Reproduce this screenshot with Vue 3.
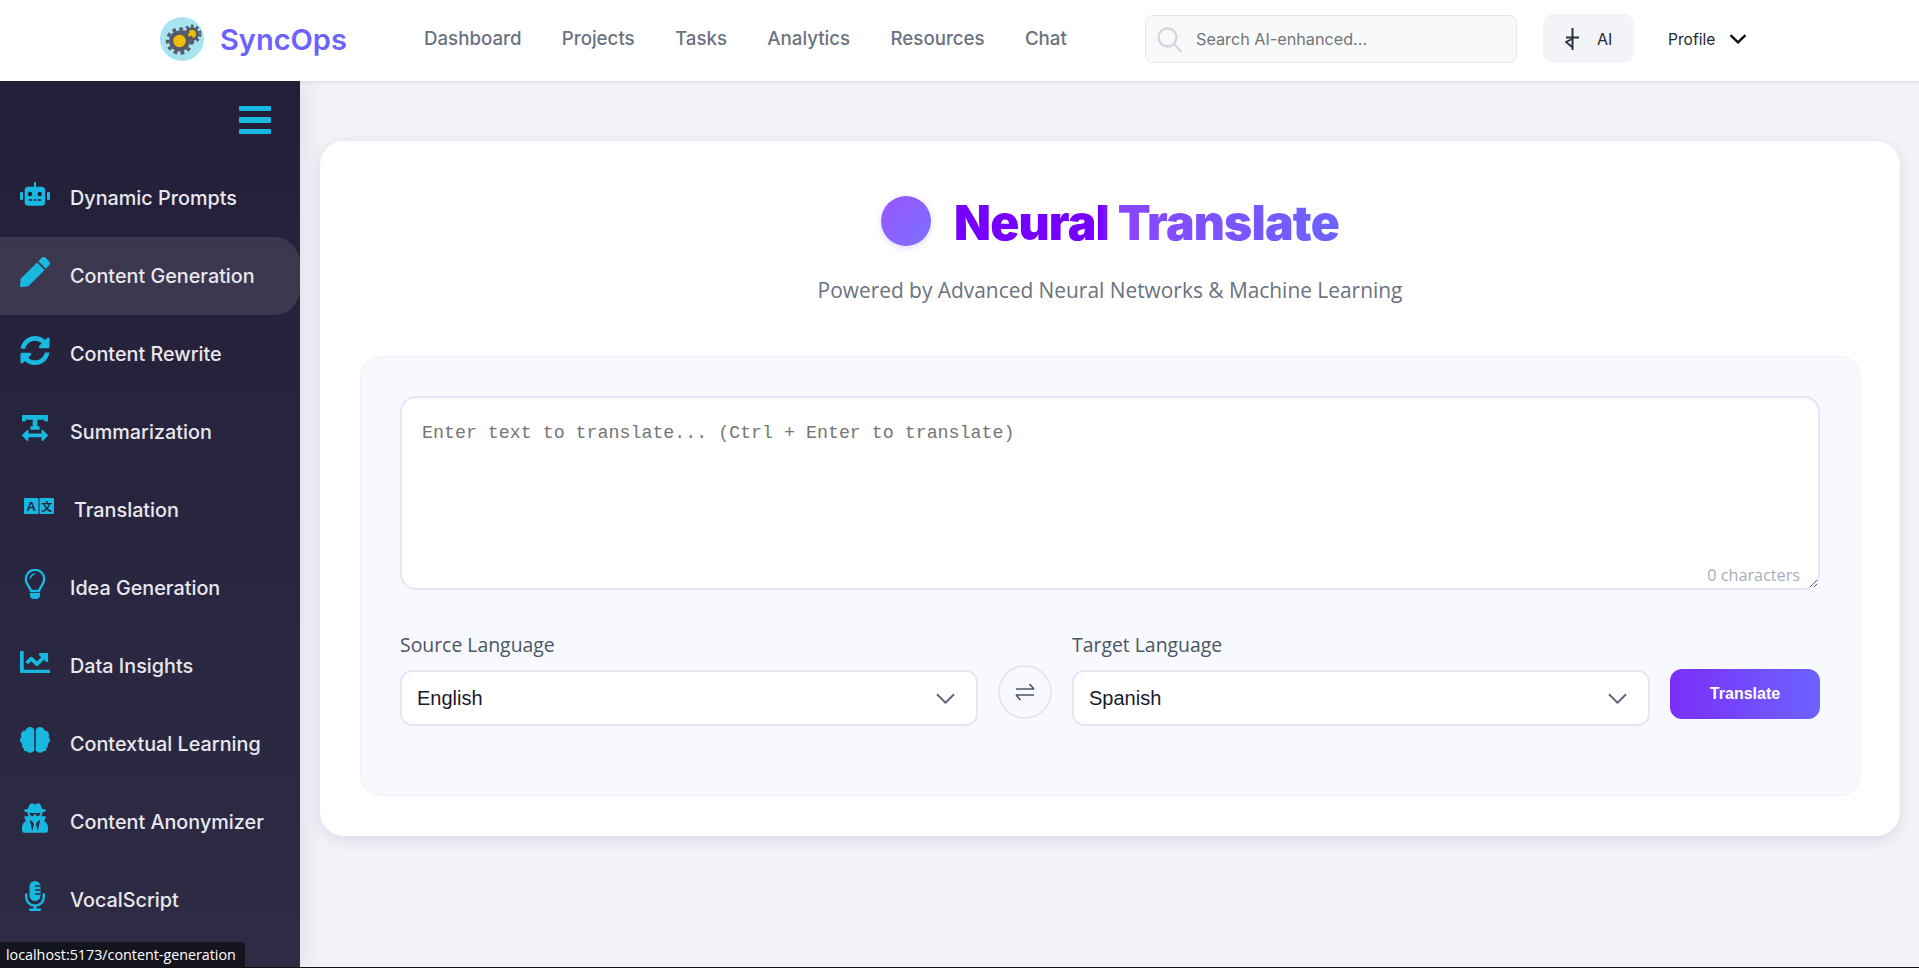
<template>
  <div class="page">
    <header class="topbar">
      <div class="brand">
        <svg class="brand-logo" viewBox="0 0 44 44">
          <circle cx="22" cy="22" r="22" fill="#a6e5f0" />
          <circle cx="32" cy="17" r="5.5" fill="#f0c000" stroke="#565a68" stroke-width="3" />
          <circle cx="32" cy="17" r="8" fill="none" stroke="#565a68" stroke-width="3" stroke-dasharray="2.6 2.6" />
          <circle cx="19.5" cy="24" r="10.5" fill="#565a68" />
          <circle cx="19.5" cy="24" r="12" fill="none" stroke="#565a68" stroke-width="3.4" stroke-dasharray="3.6 3.4" />
          <circle cx="19.5" cy="24" r="6.2" fill="#f0c000" />
        </svg>
        <span class="brand-name">SyncOps</span>
      </div>
      <nav class="nav">
        <span v-for="n in navLinks" :key="n">{{ n }}</span>
      </nav>
      <div class="search">
        <svg class="search-icon" viewBox="0 0 25 25" fill="none" stroke="#d3d6dd" stroke-width="2.4">
          <circle cx="10.5" cy="10.5" r="9" />
          <path d="M17 17l7 7.5" stroke-linecap="round" />
        </svg>
        <input type="text" placeholder="Search AI-enhanced..." />
      </div>
      <button class="ai-btn">
        <svg viewBox="0 0 14 22" width="14" height="22" fill="none" stroke="#2b3040" stroke-width="2">
          <path d="M7.5 0v22M1 9.5h13" />
          <path d="M7 11L1 14l6 5" stroke-width="1.8" />
        </svg>
        <span>AI</span>
      </button>
      <div class="profile">
        <span>Profile</span>
        <svg viewBox="0 0 18 10" width="18" height="10" fill="none" stroke="#111" stroke-width="2.4">
          <path d="M1.5 1.2L9 8.4l7.5-7.2" />
        </svg>
      </div>
    </header>

    <div class="body">
      <aside class="sidebar">
        <div class="side-head">
          <div class="burger"><i></i><i></i><i></i></div>
        </div>
        <a
          v-for="item in menu"
          :key="item.label"
          class="side-item"
          :class="{ active: item.active, shifted: item.shifted }"
        >
          <span class="side-icon">
            <svg :viewBox="item.box" :width="item.w" :height="item.h" fill="#18b8e0" v-html="item.svg"></svg>
          </span>
          <span class="side-label">{{ item.label }}</span>
        </a>
      </aside>

      <main class="main">
        <section class="card">
          <div class="title-row">
            <span class="title-dot"></span>
            <h1>Neural Translate</h1>
          </div>
          <p class="subtitle">Powered by Advanced Neural Networks &amp; Machine Learning</p>

          <div class="panel">
            <div class="input-wrap">
              <textarea placeholder="Enter text to translate... (Ctrl + Enter to translate)"></textarea>
              <span class="count">0 characters</span>
            </div>
            <div class="controls">
              <div class="lang">
                <label>Source Language</label>
                <div class="select">
                  <span>English</span>
                  <svg viewBox="0 0 20 11" width="19" height="11" fill="none" stroke="#62667a" stroke-width="2">
                    <path d="M1 1l9 9 9-9" />
                  </svg>
                </div>
              </div>
              <button class="swap">
                <svg viewBox="0 0 20 18" width="20" height="18" fill="none" stroke="#4d5266" stroke-width="1.6">
                  <path d="M1 6h18M14.5 1l4.5 5M19 12H1M5.5 17L1 12" />
                </svg>
              </button>
              <div class="lang">
                <label>Target Language</label>
                <div class="select">
                  <span>Spanish</span>
                  <svg viewBox="0 0 20 11" width="19" height="11" fill="none" stroke="#62667a" stroke-width="2">
                    <path d="M1 1l9 9 9-9" />
                  </svg>
                </div>
              </div>
              <button class="translate">Translate</button>
            </div>
          </div>
        </section>
      </main>
    </div>

    <div class="status">localhost:5173/content-generation</div>
    <div class="bottom-line"></div>
  </div>
</template>

<script setup>
const navLinks = ['Dashboard', 'Projects', 'Tasks', 'Analytics', 'Resources', 'Chat']

const brainSide = `
  <circle cx="10" cy="6.3" r="4.3"/><circle cx="5.5" cy="10" r="4.5"/><circle cx="4.4" cy="15" r="4.4"/>
  <circle cx="6.5" cy="20" r="4.5"/><circle cx="10" cy="23.5" r="4.3"/><rect x="4" y="6" width="10.2" height="20"/>`

const menu = [
  {
    label: 'Dynamic Prompts', box: '0 0 30 30', w: 30, h: 30,
    svg: `<rect x="14" y="3" width="2" height="6"/><rect x="4.7" y="7.7" width="20.4" height="19" rx="3.5"/>
      <rect x="0" y="13" width="3" height="8" rx="1"/><rect x="27" y="13" width="3" height="8" rx="1"/>
      <circle cx="10" cy="15" r="2.2" fill="#241f38"/><circle cx="19.7" cy="15" r="2.2" fill="#241f38"/>
      <path d="M9 21h12" stroke="#241f38" stroke-width="1.6" stroke-dasharray="3 1.5"/>`
  },
  {
    label: 'Content Generation', active: true, box: '0 0 512 512', w: 30, h: 30,
    svg: `<path d="M290.74 93.24l128.02 128.02-277.99 277.99-114.14 12.6C11.35 513.54-1.56 500.62.14 485.34l12.7-114.22 277.9-277.88zm207.2-19.06l-60.11-60.11c-18.75-18.75-49.16-18.75-67.91 0l-56.55 56.55 128.02 128.02 56.55-56.55c18.75-18.76 18.75-49.16 0-67.91z"/>`
  },
  {
    label: 'Content Rewrite', box: '0 0 512 512', w: 31, h: 31,
    svg: `<path d="M370.72 133.28C339.458 104.008 298.888 87.962 255.848 88c-77.458.068-144.328 53.178-162.791 126.85-1.344 5.363-6.122 9.15-11.651 9.15H24.103c-7.498 0-13.194-6.807-11.807-14.176C33.933 94.924 134.813 8 256 8c66.448 0 126.791 26.136 171.315 68.685L463.03 40.97C478.149 25.851 504 36.559 504 57.941V192c0 13.255-10.745 24-24 24H345.941c-21.382 0-32.09-25.851-16.971-40.971l41.75-41.749zM32 296h134.059c21.382 0 32.09 25.851 16.971 40.971l-41.75 41.75c31.262 29.273 71.835 45.319 114.876 45.28 77.418-.07 144.315-53.144 162.787-126.849 1.344-5.363 6.122-9.15 11.651-9.15h57.304c7.498 0 13.194 6.807 11.807 14.176C478.067 417.076 377.187 504 256 504c-66.448 0-126.791-26.136-171.315-68.685L48.97 471.03C33.851 486.149 8 475.441 8 454.059V320c0-13.255 10.745-24 24-24z"/>`
  },
  {
    label: 'Summarization', box: '0 32 448 448', w: 26, h: 26,
    svg: `<path d="M432 32H16A16 16 0 0 0 0 48v80a16 16 0 0 0 16 16h32a16 16 0 0 0 16-16v-16h120v112h-24a16 16 0 0 0-16 16v32a16 16 0 0 0 16 16h128a16 16 0 0 0 16-16v-32a16 16 0 0 0-16-16h-24V112h120v16a16 16 0 0 0 16 16h32a16 16 0 0 0 16-16V48a16 16 0 0 0-16-16zm-68.69 260.69C354 283.36 336 288.36 336 304v48H112v-48c0-14.31-17.31-21.32-27.31-11.31l-80 80a16 16 0 0 0 0 22.62l80 80C94 484.64 112 479.64 112 464v-48h224v48c0 14.31 17.31 21.32 27.31 11.31l80-80a16 16 0 0 0 0-22.62z"/>`
  },
  {
    label: 'Translation', shifted: true, box: '0 0 30 16', w: 30, h: 16,
    svg: `<rect x="0" y="0" width="14.5" height="16" rx="1"/><rect x="15.5" y="0" width="14.5" height="16" rx="1"/>
      <text x="7.2" y="13" font-size="13" font-weight="700" text-anchor="middle" fill="#2a2640" font-family="'Liberation Sans', sans-serif">A</text>
      <text x="22.7" y="12.8" font-size="11" font-weight="700" text-anchor="middle" fill="#2a2640" font-family="'Noto Sans CJK SC', sans-serif">文</text>`
  },
  {
    label: 'Idea Generation', box: '0 0 30 30', w: 30, h: 30,
    svg: `<path d="M11 22C10.4 18 5.8 16 5.8 10A9.2 9.2 0 0 1 24.2 10C24.2 16 19.6 18 19 22Z" fill="none" stroke="#18b8e0" stroke-width="2.4"/>
      <path d="M15 5a5.5 5.5 0 0 0-4.8 4.6" fill="none" stroke="#18b8e0" stroke-width="1.4"/>
      <path d="M10 24h10v2a4 4 0 0 1-4 4h-2a4 4 0 0 1-4-4z"/>`
  },
  {
    label: 'Data Insights', box: '0 64 512 384', w: 30, h: 22.5,
    svg: `<path d="M496 384H64V80c0-8.84-7.16-16-16-16H16C7.16 64 0 71.16 0 80v336c0 17.67 14.33 32 32 32h464c8.84 0 16-7.16 16-16v-32c0-8.84-7.16-16-16-16zM464 96H345.94c-21.38 0-32.09 25.85-16.97 40.97l32.4 32.4L288 242.75l-73.37-73.37c-12.5-12.5-32.76-12.5-45.25 0l-68.69 68.69c-6.25 6.25-6.25 16.38 0 22.63l22.62 22.62c6.25 6.25 16.38 6.25 22.63 0L192 237.25l73.37 73.37c12.5 12.5 32.76 12.5 45.25 0l96-96 32.4 32.4c15.12 15.12 40.97 4.41 40.97-16.97V112c0-8.84-7.16-16-16-16z"/>`
  },
  {
    label: 'Contextual Learning', box: '0 0 30 30', w: 30, h: 30,
    svg: `<g>${brainSide}</g><g transform="matrix(-1 0 0 1 30 0)">${brainSide}</g>`
  },
  {
    label: 'Content Anonymizer', box: '0 0 448 512', w: 26, h: 30,
    svg: `<path d="M383.9 308.3l23.9-62.6c4-10.5-3.7-21.7-15-21.7h-58.5c11-18.9 17.8-40.6 17.8-64v-.3c39.2-7.8 64-19.1 64-31.7 0-13.3-27.3-25.1-70.1-33-9.2-32.8-27-65.8-40.6-82.8-9.5-11.9-25.9-15.6-39.5-8.8l-27.6 13.8c-9 4.5-19.6 4.5-28.6 0L182.1 3.4c-13.6-6.8-30-3.1-39.5 8.8-13.5 17-31.4 50-40.6 82.8-42.7 7.9-70 19.7-70 33 0 12.6 24.8 23.9 64 31.7v.3c0 23.4 6.8 45.1 17.8 64H56.3c-11.5 0-19.2 11.7-14.7 22.3l25.8 60.2C27.3 329.8 0 372.7 0 422.4v44.8C0 491.9 20.1 512 44.8 512h358.4c24.7 0 44.8-20.1 44.8-44.8v-44.8c0-48.4-25.8-90.4-64.1-114.1zM176 480l-41.6-192 49.6 32 24 40-32 120zm96 0l-32-120 24-40 49.6-32L272 480zm41.7-298.5c-3.9 11.9-7 24.6-16.5 33.4-10.1 9.3-48 22.4-64-25-2.8-8.4-15.4-8.4-18.3 0-17 50.2-56 32.4-64 25-9.5-8.8-12.7-21.5-16.5-33.4-.8-2.5-6.3-5.7-6.3-5.8v-10.8c28.3 3.6 61 5.8 96 5.8s67.7-2.1 96-5.8v10.8c-.1.1-5.6 3.2-6.4 5.8z"/>`
  },
  {
    label: 'VocalScript', box: '0 0 30 30', w: 30, h: 30,
    svg: `<rect x="9.5" y="0" width="11" height="20" rx="5.5"/>
      <path d="M15 5h5.5M15 9h5.5M15 13h5.5" stroke="#2c2942" stroke-width="1.3"/>
      <path d="M6.2 12.5v3.5a8.8 8.8 0 0 0 17.6 0v-3.5" fill="none" stroke="#18b8e0" stroke-width="2.4"/>
      <rect x="13.6" y="24" width="2.8" height="5"/><rect x="9" y="27.6" width="12" height="2.4" rx="1"/>`
  }
]
</script>

<style>
html, body { margin: 0; padding: 0; overflow: hidden; }
</style>

<style scoped>
* { box-sizing: border-box; }
.page {
  height: 100vh;
  display: flex;
  flex-direction: column;
  background: #f3f3f9;
  font-family: Inter, "Liberation Sans", sans-serif;
  overflow: hidden;
}

/* top bar */
.topbar {
  height: 81px;
  flex: none;
  display: flex;
  align-items: center;
  background: #fff;
  box-shadow: 0 1px 4px rgba(40, 40, 80, 0.12);
  padding-left: 160px;
  position: relative;
  z-index: 3;
}
.brand { display: flex; align-items: center; gap: 16px; width: 264px; }
.brand-logo { width: 44px; height: 44px; flex: none; margin-top: -3px; }
.brand-name { font-size: 29px; font-weight: 600; color: #6c63ff; margin-top: -2px; }
.nav { display: flex; gap: 40.3px; font-size: 18.7px; font-weight: 500; color: #6b7280; width: 721px; margin-top: -4px; }
.search {
  width: 372px;
  height: 48px;
  display: flex;
  align-items: center;
  gap: 14px;
  padding-left: 11px;
  background: #f8f9fb;
  border: 1px solid #e5e7eb;
  border-radius: 8px;
  margin-top: -3px;
}
.search-icon { width: 25px; height: 25px; flex: none; }
.search input {
  border: 0;
  background: none;
  outline: none;
  font: 16.2px Inter, sans-serif;
  width: 300px;
  padding: 0;
}
.search input::placeholder { color: #757575; }
.ai-btn {
  width: 91px;
  height: 49px;
  margin-left: 26px;
  margin-top: -4px;
  border: 0;
  border-radius: 10px;
  background: #f3f4f8;
  display: flex;
  align-items: center;
  gap: 18px;
  padding: 0 0 0 22px;
  font: 16px Inter, sans-serif;
  color: #1f2937;
}
.profile {
  margin-left: 34px;
  margin-top: -3px;
  display: flex;
  align-items: center;
  gap: 14px;
  font-size: 15.6px;
  color: #1f2937;
}

/* sidebar */
.body { flex: 1; display: flex; min-height: 0; }
.sidebar {
  width: 300px;
  flex: none;
  background: linear-gradient(180deg, #231f38, #2e2b44);
  box-shadow: 4px 0 20px rgba(40, 40, 80, 0.1);
  position: relative;
  z-index: 2;
}
.side-head { height: 78px; display: flex; align-items: center; justify-content: flex-end; padding-right: 29px; }
.burger { display: flex; flex-direction: column; gap: 6px; width: 32px; }
.burger i { display: block; height: 5.4px; background: #18b8e0; border-radius: 1px; }
.side-item {
  height: 78px;
  display: flex;
  align-items: center;
  gap: 20px;
  padding-left: 20px;
  font-size: 19.8px;
  font-weight: 500;
  color: #e8e8ee;
}
.side-item.shifted { padding-left: 24px; gap: 20px; }
.side-item.active {
  background: rgba(255, 255, 255, 0.1);
  border-radius: 0 26px 26px 0;
}
.side-icon {
  width: 30px;
  height: 30px;
  flex: none;
  display: flex;
  align-items: center;
  justify-content: center;
  margin-bottom: 8px;
}

/* main card */
.main { flex: 1; padding: 60px 19px 0 20px; min-width: 0; }
.card {
  height: 695px;
  background: #fff;
  border-radius: 24px;
  box-shadow: 0 4px 16px rgba(40, 40, 80, 0.12);
  padding: 40px;
}
.title-row { height: 80px; display: flex; align-items: center; justify-content: center; gap: 23px; }
.title-dot {
  width: 50px;
  height: 50px;
  border-radius: 50%;
  background: linear-gradient(135deg, #9a55ff, #7a70ff);
  box-shadow: 0 2px 6px rgba(108, 99, 255, 0.25);
}
h1 {
  margin: 2px 0 0;
  font-family: Inter, sans-serif;
  font-size: 48px;
  font-weight: 900;
  letter-spacing: -0.8px;
  background: linear-gradient(90deg, #7600ff 0%, #7600ff 38%, #8a45ff 42%, #6c63ff 100%);
  -webkit-background-clip: text;
  background-clip: text;
  color: transparent;
}
.subtitle {
  margin: 15px 0 0;
  height: 28px;
  line-height: 28px;
  text-align: center;
  font-family: "Open Sans", sans-serif;
  font-size: 20.9px;
  color: #6b7280;
}
.panel {
  margin-top: 52px;
  height: 440px;
  background: #f8f9fe;
  border: 1px solid #f1f2f8;
  border-radius: 20px;
  padding: 39px;
}
.input-wrap { position: relative; height: 194px; }
.input-wrap textarea {
  display: block;
  width: 100%;
  height: 194px;
  border: 2px solid #e4e7f3;
  border-radius: 16px;
  background: #fff;
  padding: 23px 20px 20px;
  outline: none;
  resize: vertical;
  font-family: "Liberation Mono", monospace;
  font-size: 18.3px;
  line-height: 24px;
}
.input-wrap textarea::placeholder { color: #757575; opacity: 1; }
.count {
  position: absolute;
  right: 20px;
  bottom: 4px;
  font-family: "Open Sans", sans-serif;
  font-size: 16.2px;
  color: #a9adb8;
}
.controls { margin-top: 43px; display: flex; align-items: flex-end; gap: 20px; }
.lang { flex: 1; min-width: 0; }
.lang label {
  display: block;
  height: 24px;
  line-height: 24px;
  margin-bottom: 13px;
  font-family: "Open Sans", sans-serif;
  font-size: 19.4px;
  font-weight: 500;
  color: #4b5563;
}
.select {
  height: 56px;
  display: flex;
  align-items: center;
  justify-content: space-between;
  padding: 0 21px 0 15px;
  background: #fff;
  border: 2px solid #e4e7f3;
  border-radius: 12px;
  font-family: "Liberation Sans", sans-serif;
  font-size: 20px;
  color: #1a1a2e;
}
.swap {
  width: 54px;
  height: 54px;
  flex: none;
  margin-bottom: 7px;
  padding: 0;
  display: flex;
  align-items: center;
  justify-content: center;
  background: transparent;
  border: 2px solid #e4e7f3;
  border-radius: 50%;
}
.translate {
  width: 150px;
  height: 50px;
  flex: none;
  margin-bottom: 7px;
  border: 0;
  border-radius: 12px;
  background: linear-gradient(90deg, #7b2ff7, #6c63ff);
  color: #fff;
  font-family: "Liberation Sans", sans-serif;
  font-size: 16px;
  font-weight: 700;
}

/* browser status bubble */
.status {
  position: fixed;
  left: 0;
  bottom: 1px;
  width: 245px;
  height: 25px;
  line-height: 25px;
  padding-left: 6px;
  background: #14141e;
  border-top-right-radius: 4px;
  color: #fff;
  font-family: "Open Sans", sans-serif;
  font-size: 14.3px;
  white-space: nowrap;
  z-index: 5;
}
.bottom-line {
  position: fixed;
  left: 0;
  right: 0;
  bottom: 0;
  height: 1px;
  background: #111;
  z-index: 5;
}
</style>
